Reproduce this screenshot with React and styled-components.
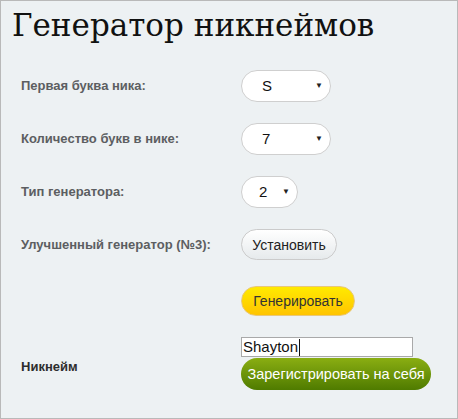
import React from 'react';
import styled, { createGlobalStyle } from 'styled-components';

const GlobalStyle = createGlobalStyle`
  html, body {
    margin: 0;
    padding: 0;
    background: #edf1f3;
  }
  * {
    box-sizing: border-box;
  }
`;

const Frame = styled.div`
  width: 458px;
  height: 419px;
  border: 1px solid #b9b9b9;
  background: #edf1f3;
  font-family: 'Liberation Sans', Arial, sans-serif;
  padding: 0 0 0 20px;
`;

const Title = styled.h1`
  margin: 0 0 0 -9px;
  padding-top: 8px;
  height: 58px;
  font-family: 'DejaVu Serif', 'Liberation Serif', serif;
  font-weight: normal;
  font-size: 31px;
  line-height: 32px;
  color: #111;
`;

const Row = styled.div`
  display: flex;
  align-items: center;
  height: ${p => p.$h || 53}px;
  margin-top: ${p => p.$mt || 0}px;
`;

const Label = styled.div`
  width: 220px;
  flex-shrink: 0;
  font-size: 13px;
  font-weight: bold;
  color: ${p => (p.$dark ? '#2d2d2d' : '#5c5e61')};
  padding-top: ${p => p.$pt || 0}px;
`;

const SelectWrap = styled.div`
  position: relative;
  width: ${p => p.$w}px;
  height: 32px;
`;

const Select = styled.select`
  appearance: none;
  width: 100%;
  height: 100%;
  border: 1px solid #cfcfcf;
  border-radius: 16px;
  background: #fff;
  font-family: 'Liberation Sans', Arial, sans-serif;
  font-size: 15px;
  color: #111;
  padding: 0 0 0 ${p => p.$pl}px;
  outline: none;
`;

const Arrow = styled.span`
  position: absolute;
  right: 8px;
  top: 11px;
  font-size: 8px;
  color: #222;
  pointer-events: none;
`;

const PillButton = styled.button`
  height: ${p => p.$h || 31}px;
  padding: 0;
  border-radius: 16px;
  font-family: 'Liberation Sans', Arial, sans-serif;
  font-size: 14px;
  white-space: nowrap;
  cursor: pointer;
`;

const GrayButton = styled(PillButton)`
  width: 96px;
  border: 1px solid #cbcbcb;
  background: linear-gradient(#ffffff, #e6eaec);
  color: #222;
`;

const YellowButton = styled(PillButton)`
  width: 114px;
  height: 30px;
  border: 1px solid #e8c77a;
  background: linear-gradient(#ffea00, #ffc400);
  color: #333;
`;

const GreenButton = styled(PillButton)`
  width: 190px;
  height: 32px;
  border: none;
  background: linear-gradient(#8aae12, #4f7b00);
  color: #fff;
  font-size: 14.5px;
`;

const Stack = styled.div`
  display: flex;
  flex-direction: column;
  gap: 1px;
`;

const Field = styled.div`
  width: 172px;
  height: 20px;
  border: 1px solid #a9a9a9;
  background: #fff;
  font-size: 15px;
  line-height: 18px;
  padding-left: 1px;
  color: #111;
  display: flex;
  align-items: center;
`;

const Caret = styled.span`
  display: inline-block;
  width: 1px;
  height: 17px;
  background: #111;
  margin-left: 1px;
`;

const Dropdown = ({ value, options, width, pad }) => (
  <SelectWrap $w={width}>
    <Select defaultValue={value} $pl={pad}>
      {options.map(o => (
        <option key={o}>{o}</option>
      ))}
    </Select>
    <Arrow>▼</Arrow>
  </SelectWrap>
);

const App = () => (
  <>
    <GlobalStyle />
    <Frame>
      <Title>Генератор никнеймов</Title>
      <Row>
        <Label>Первая буква ника:</Label>
        <Dropdown value="S" options={['A', 'B', 'S', 'Z']} width={90} pad={20} />
      </Row>
      <Row>
        <Label>Количество букв в нике:</Label>
        <Dropdown value="7" options={['5', '6', '7', '8', '9']} width={90} pad={20} />
      </Row>
      <Row>
        <Label>Тип генератора:</Label>
        <Dropdown value="2" options={['1', '2']} width={57} pad={17} />
      </Row>
      <Row>
        <Label>Улучшенный генератор (№3):</Label>
        <GrayButton>Установить</GrayButton>
      </Row>
      <Row $h={60}>
        <Label />
        <YellowButton>Генерировать</YellowButton>
      </Row>
      <Row $h={53} $mt={6}>
        <Label $dark $pt={5}>Никнейм</Label>
        <Stack>
          <Field>
            Shayton
            <Caret />
          </Field>
          <GreenButton>Зарегистрировать на себя</GreenButton>
        </Stack>
      </Row>
    </Frame>
  </>
);

export default App;
